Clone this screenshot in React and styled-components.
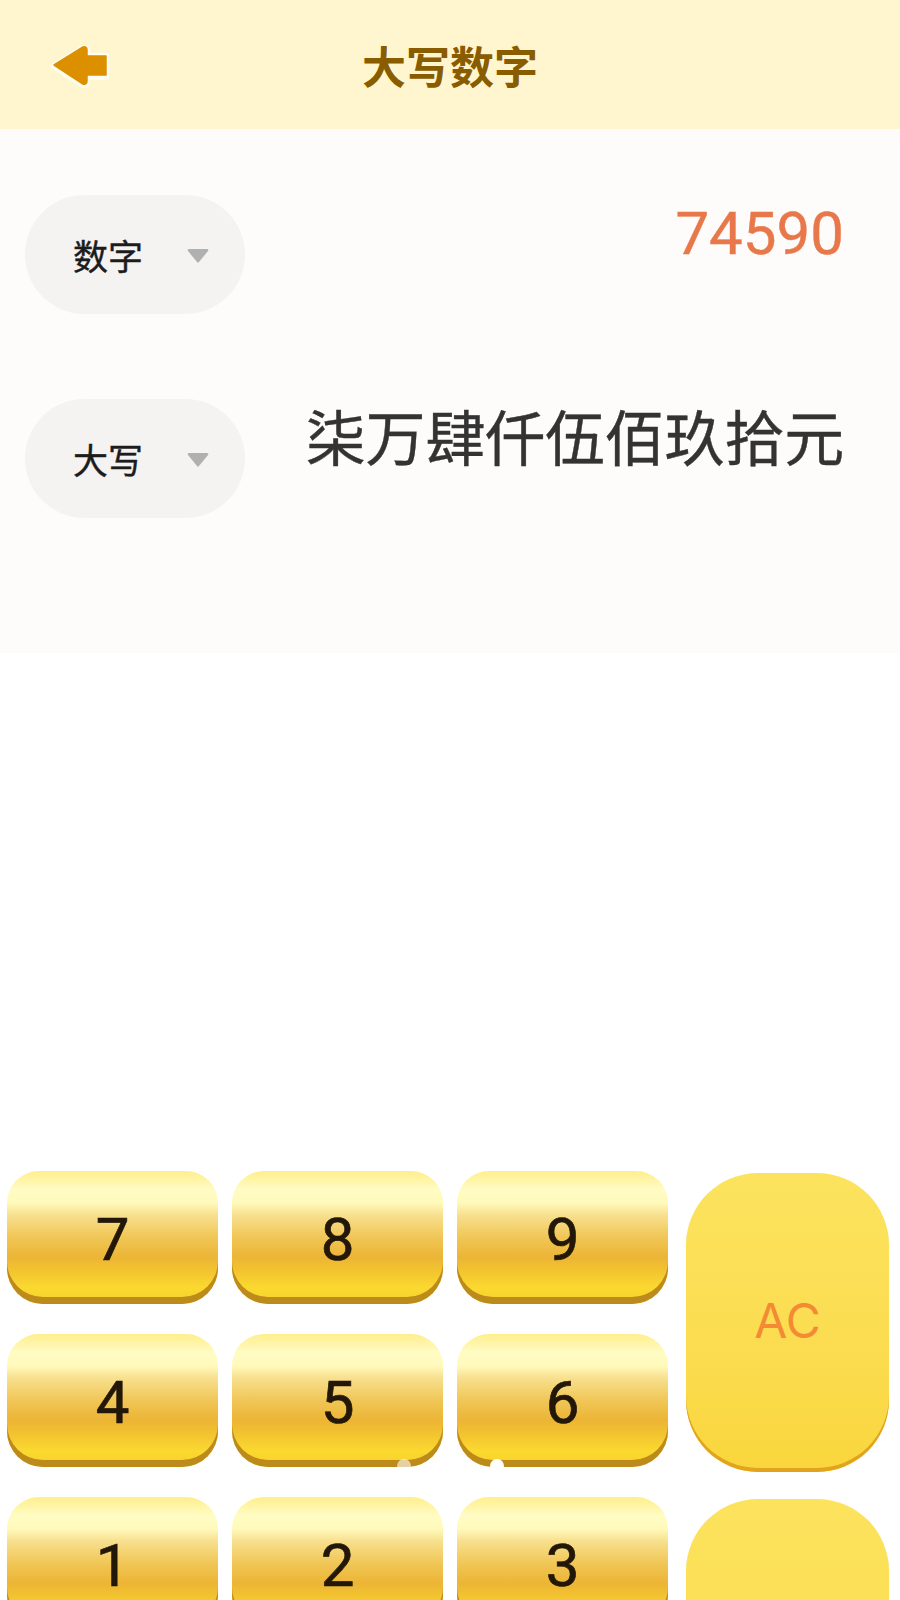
import styled, { createGlobalStyle } from "styled-components"

const GlobalStyle = createGlobalStyle`
  html, body {
    margin: 0;
    padding: 0;
    background: #fff;
  }
  * {
    box-sizing: border-box;
  }
`

const Page = styled.div`
  position: relative;
  width: 900px;
  height: 1600px;
  overflow: hidden;
  display: flex;
  flex-direction: column;
  background: #fff;
  font-family: "Noto Sans CJK SC", "Noto Sans", sans-serif;
`

const Header = styled.header`
  height: 129px;
  flex-shrink: 0;
  display: grid;
  grid-template-columns: 1fr auto 1fr;
  align-items: center;
  padding-left: 48px;
  background: #fff6cf;
`

const BackButton = styled.button`
  width: 66px;
  height: 50px;
  padding: 0;
  border: none;
  background: none;
  display: flex;
`

const Title = styled.h1`
  margin: 0 0 0 -48px;
  font-size: 44px;
  font-weight: 700;
  line-height: 1;
  color: #8a5c00;
`

const Panel = styled.section`
  height: 524px;
  flex-shrink: 0;
  padding: 66px 56px 0 25px;
  display: flex;
  flex-direction: column;
  gap: 85px;
  background: #fefcfa;
`

const Row = styled.div`
  display: flex;
  justify-content: space-between;
  align-items: flex-start;
`

const Select = styled.div`
  width: 220px;
  height: 119px;
  border-radius: 60px;
  padding: 0 36px 0 48px;
  display: flex;
  align-items: center;
  justify-content: space-between;
  background: #f4f3f2;
  font-size: 35px;
  color: #1c1c1c;
  -webkit-text-stroke: 0.4px #1c1c1c;
`

const Caret = styled.svg`
  width: 22px;
  height: 15px;
  margin-top: 2px;
`

const Digits = styled.div`
  margin-top: 4px;
  font-family: Roboto, "Noto Sans", sans-serif;
  font-size: 60px;
  line-height: 70px;
  color: #e8784a;
  -webkit-text-stroke: 0.4px #e8784a;
`

const Words = styled.div`
  margin-top: -4px;
  font-size: 60px;
  letter-spacing: -0.2px;
  line-height: 80px;
  color: #333;
  -webkit-text-stroke: 0.4px #333;
`

const Keypad = styled.div`
  margin-top: 518px;
  padding: 0 12px 0 7px;
  display: grid;
  grid-template-columns: repeat(3, 211px) 201px;
  grid-auto-rows: 133px;
  column-gap: 14px;
  row-gap: 30px;
`

const Key = styled.button`
  border: none;
  padding: 4px 0 0;
  border-radius: 32px 32px 36px 36px;
  font-family: Roboto, "Noto Sans", sans-serif;
  font-size: 60px;
  color: #231708;
  -webkit-text-stroke: 0.7px #231708;
  background: linear-gradient(
    180deg,
    #ffee8c 0%,
    #fffcc4 14%,
    #fffabb 24%,
    #f8e08f 33%,
    #f0c656 50%,
    #ecb535 65%,
    #f3c52f 76%,
    #fbd92f 88%,
    #f6cf2c 100%
  );
  box-shadow: inset 0 -7px 0 #bd8a1c;
`

const SideKey = styled.button`
  grid-column: 4;
  grid-row: ${(p) => p.$row} / span 2;
  margin: 2px 0 0 4px;
  border: none;
  padding: 0 0 4px;
  width: 203px;
  height: 299px;
  border-radius: 72px;
  font-family: Inter, Roboto, sans-serif;
  font-size: 48px;
  color: #f58a35;
  background: linear-gradient(180deg, #fce35e 0%, #fbdc50 60%, #f9d63c 100%);
  box-shadow: inset 0 -4px 0 #e2a41c;
`

const Dot = styled.span`
  position: absolute;
  top: 1459px;
  left: ${(p) => p.$left}px;
  width: 14px;
  height: 14px;
  border-radius: 50%;
  background: #fff;
  opacity: ${(p) => p.$fade};
`

const BackArrow = () => (
  <svg width="66" height="50" viewBox="48 40 66 50" fill="none">
    <path
      d="M54 66 83 48q4-1 4 3v5h19v21H87v5q0 4-4 3Z"
      fill="#b97a00"
      stroke="#fffdf0"
      strokeWidth="6"
      strokeLinejoin="round"
    />
    <path
      d="M54 65 83 47q4-1 4 3v6h19v19H87v6q0 4-4 3Z"
      fill="#dc9000"
      stroke="#dc9000"
      strokeWidth="1.5"
      strokeLinejoin="round"
    />
  </svg>
)

const SelectCaret = () => (
  <Caret viewBox="0 0 22 15">
    <path d="M2 1h18q2 0 1 2L12 14q-1 1-2 0L1 3Q0 1 2 1Z" fill="#b0b0b0" />
  </Caret>
)

const digitRows = [
  ["7", "8", "9"],
  ["4", "5", "6"],
  ["1", "2", "3"],
]

function App() {
  return (
    <Page>
      <GlobalStyle />
      <Header>
        <BackButton>
          <BackArrow />
        </BackButton>
        <Title>大写数字</Title>
      </Header>
      <Panel>
        <Row>
          <Select>
            数字
            <SelectCaret />
          </Select>
          <Digits>74590</Digits>
        </Row>
        <Row>
          <Select>
            大写
            <SelectCaret />
          </Select>
          <Words>柒万肆仟伍佰玖拾元</Words>
        </Row>
      </Panel>
      <Keypad>
        {digitRows.flat().map((d) => (
          <Key key={d}>{d}</Key>
        ))}
        <SideKey $row={1}>AC</SideKey>
        <SideKey $row={3} />
      </Keypad>
      <Dot $left={397} $fade={0.6} />
      <Dot $left={490} $fade={1} />
    </Page>
  )
}

export default App
